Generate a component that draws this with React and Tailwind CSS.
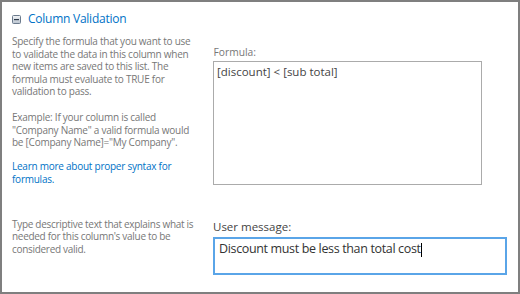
function Lines({ lines, lh, className }) {
  return (
    <div className={className}>
      {lines.map((l, i) => (
        <div key={i} className="whitespace-nowrap" style={{ height: lh, lineHeight: lh + "px" }}>
          {l}
        </div>
      ))}
    </div>
  );
}

export default function App() {
  const font = { fontFamily: '"Open Sans", "Noto Sans", sans-serif' };
  return (
    <div
      className="w-[520px] h-[294px] border-2 border-[#7f7f7f] bg-white flex overflow-hidden"
      style={font}
    >
      <div className="w-[210px] shrink-0 pl-[10px] pt-[9px]">
        <div className="flex items-center h-[16px]">
          <svg width="9" height="9" viewBox="0 0 9 9" className="mr-[7px] mt-[1px]">
            <defs>
              <linearGradient id="g" x1="0" y1="0" x2="0" y2="1">
                <stop offset="0" stopColor="#f4f6f8" />
                <stop offset="1" stopColor="#b9c3cf" />
              </linearGradient>
            </defs>
            <rect x="0.5" y="0.5" width="8" height="8" rx="1" fill="url(#g)" stroke="#6b7a8c" />
            <rect x="2" y="4" width="5" height="1.2" fill="#2d3a4a" />
          </svg>
          <span className="text-[12px] tracking-[-0.25px] text-[#0072c6] leading-[16px]">Column Validation</span>
        </div>
        <Lines
          lh={12.5}
          className="mt-[8px] text-[10px] tracking-[-0.25px] text-[#777]"
          lines={[
            "Specify the formula that you want to use",
            "to validate the data in this column when",
            "new items are saved to this list. The",
            "formula must evaluate to TRUE for",
            "validation to pass.",
          ]}
        />
        <Lines
          lh={12.5}
          className="mt-[13.5px] text-[10px] tracking-[-0.25px] text-[#777]"
          lines={[
            "Example: If your column is called",
            "\"Company Name\" a valid formula would",
            "be [Company Name]=\"My Company\".",
          ]}
        />
        <Lines
          lh={13.5}
          className="mt-[11px] text-[10px] tracking-[-0.25px] text-[#0072c6]"
          lines={["Learn more about proper syntax for", "formulas."]}
        />
        <Lines
          lh={12.75}
          className="mt-[31px] text-[10px] tracking-[-0.3px] text-[#777]"
          lines={[
            "Type descriptive text that explains what is",
            "needed for this column's value to be",
            "considered valid.",
          ]}
        />
      </div>
      <div className="flex-1 pl-[1px] pt-[44px]">
        <div className="text-[10.25px] leading-[12px] text-[#777] pl-[0.5px]">Formula:</div>
        <div className="mt-[3px] w-[269px] h-[124px] border border-[#ababab] px-[3px] pt-[3px] text-[11.5px] leading-[14px] text-[#444]">
          [discount] &lt; [sub total]
        </div>
        <div className="mt-[35px] text-[11.5px] leading-[14px] text-[#444]">User message:</div>
        <div className="mt-[3px] w-[294px] h-[38px] border-2 border-[#5aa5e8] px-[4px] pt-[1px] text-[12.5px] tracking-[-0.35px] leading-[18px] text-[#333] flex items-start">
          <span className="whitespace-nowrap">Discount must be less than total cost</span>
          <span className="inline-block w-[1px] h-[14px] bg-black mt-[3px]" />
        </div>
      </div>
    </div>
  );
}
